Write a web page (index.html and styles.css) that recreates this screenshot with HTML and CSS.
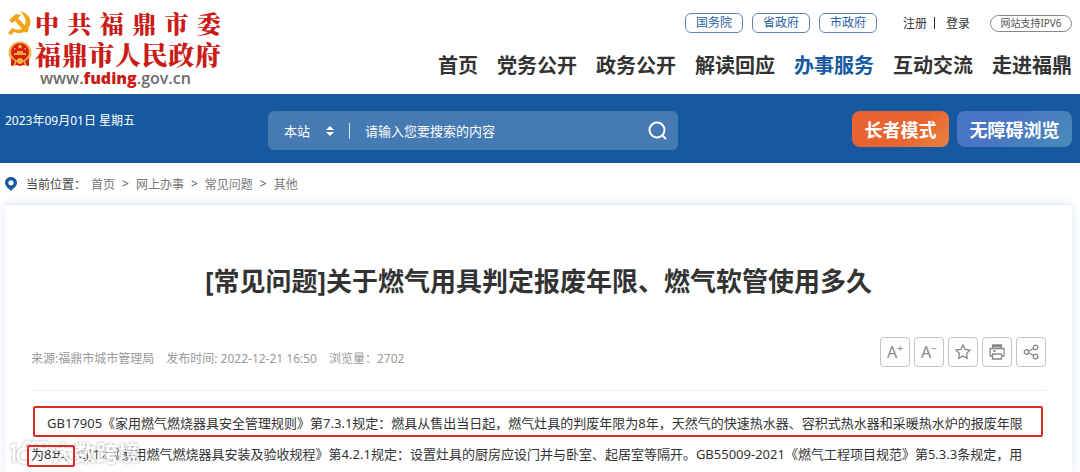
FILE: index.html
```
<!DOCTYPE html>
<html lang="zh-CN">
<head>
  <meta charset="UTF-8">
  <title>关于燃气用具判定报废年限、燃气软管使用多久</title>
  <link rel="stylesheet" href="styles.css">
</head>
<body>

  <header class="header">
    <a class="logo" href="#">
      <svg class="emblem" viewBox="0 0 24 24">
        <path d="M12 0C20 2 24 8 22 14C20 21 12 24 6 21L3 24L0 22L4 17C9 20 15 19 17 14C19 9 16 4 12 0Z" fill="#f2a516"/>
        <path d="M1 9L8 3L13 4L10 7L21 19L18 22L7 10L4 12Z" fill="#f2a516"/>
      </svg>
      <span class="logo-name party"><span>中</span><span>共</span><span>福</span><span>鼎</span><span>市</span><span>委</span></span>
      <svg class="emblem" viewBox="0 0 24 26">
        <circle cx="12" cy="12" r="11.5" fill="#eeb84c"/>
        <circle cx="12" cy="11" r="9" fill="#d91f17"/>
        <path d="M12 3l.8 1.800h1.800l-1.400 1.200.5 1.800-1.700-1-1.700 1 .5-1.800-1.400-1.200h1.800z" fill="#f6d04d"/>
        <path d="M6 14h12v-2h-3v-2H9v2H6zM6 7h1.500v1.500H6zM16.500 7H18v1.500h-1.500z" fill="#f6a83a"/>
        <path d="M3 17l5 2h8l5-2v8l-5-1-4 1-4-1-5 1z" fill="#d91f17"/>
        <path d="M4 17l4 3h8l4-3M8 20l-2 5M16 20l2 5" fill="none" stroke="#f0b63a" stroke-width="1.500"/>
        <circle cx="12" cy="20" r="3" fill="#f0b63a"/>
      </svg>
      <span class="logo-name"><span>福</span><span>鼎</span><span>市</span><span>人</span><span>民</span><span>政</span><span>府</span></span>
      <span class="logo-url">www.<b>fuding</b>.gov.cn</span>
    </a>

    <div class="header-right">
      <div class="top-links">
        <a class="gov" href="#">国务院</a>
        <a class="gov" href="#">省政府</a>
        <a class="gov" href="#">市政府</a>
        <span class="login"><a href="#">注册</a><i></i><a href="#">登录</a></span>
        <a class="ipv6" href="#">网站支持IPV6</a>
      </div>
      <nav class="nav">
        <a href="#">首页</a>
        <a href="#">党务公开</a>
        <a href="#">政务公开</a>
        <a href="#">解读回应</a>
        <a class="active" href="#">办事服务</a>
        <a href="#">互动交流</a>
        <a href="#">走进福鼎</a>
      </nav>
    </div>
  </header>

  <div class="banner">
    <div class="date">2023年09月01日 星期五</div>
    <form class="search">
      <span class="scope">
        <select aria-label="搜索范围"><option>本站</option></select>
        <svg viewBox="0 0 8 12"><path d="M4 1l4 4H0zM4 11l4-4H0z" fill="#fff"/></svg>
      </span>
      <input type="text" aria-label="搜索" placeholder="请输入您要搜索的内容">
      <button type="button" aria-label="搜索">
        <svg viewBox="0 0 20 20" fill="none" stroke="#fff" stroke-width="2"><circle cx="9" cy="9" r="7.500"/><path d="M14 14l4 4"/></svg>
      </button>
    </form>
    <div class="modes">
      <button class="mode elder" type="button">长者模式</button>
      <button class="mode barrier" type="button">无障碍浏览</button>
    </div>
  </div>

  <nav class="crumbs">
    <svg viewBox="0 0 12 14"><path d="M6 0C2.500 0 0 2.600 0 5.800C0 9 3 11 6 14C9 11 12 9 12 5.800C12 2.600 9.500 0 6 0ZM6 3.200a2.600 2.600 0 1 1 0 5.200a2.600 2.600 0 0 1 0-5.200Z" fill="#1659a0"/></svg>
    <span class="here">当前位置：</span>
    <a href="#">首页</a><span>&gt;</span>
    <a href="#">网上办事</a><span>&gt;</span>
    <a href="#">常见问题</a><span>&gt;</span>
    <a href="#">其他</a>
  </nav>

  <main class="card">
    <h1>[常见问题]关于燃气用具判定报废年限、燃气软管使用多久</h1>

    <div class="meta">
      <span>来源:福鼎市城市管理局</span>
      <span>发布时间: 2022-12-21 16:50</span>
      <span>浏览量：2702</span>
      <div class="tools">
        <button type="button" aria-label="放大字体">A<sup>+</sup></button>
        <button type="button" aria-label="缩小字体">A<sup>−</sup></button>
        <button type="button" aria-label="收藏">
          <svg viewBox="0 0 16 16"><path d="M8 1l2.100 4.400 4.900.7-3.500 3.400.8 4.900L8 12.100l-4.300 2.300.8-4.900L1 6.100l4.900-.7z"/></svg>
        </button>
        <button type="button" aria-label="打印">
          <svg viewBox="0 0 16 16"><path d="M3.500 4.500V1h9v3.500M3.500 12H1V4.500h14V12h-2.500M3.500 10h9v5h-9zM4 7h3M3.500 2.500h9"/></svg>
        </button>
        <button type="button" aria-label="分享">
          <svg viewBox="0 0 16 16"><circle cx="3.500" cy="8" r="2.300"/><circle cx="12.500" cy="3.500" r="2.300"/><circle cx="12.500" cy="12.500" r="2.300"/><path d="M5.600 7l4.800-2.500M5.600 9l4.800 2.500"/></svg>
        </button>
      </div>
    </div>

    <div class="article">
      <p>GB17905《家用燃气燃烧器具安全管理规则》第7.3.1规定：燃具从售出当日起，燃气灶具的判废年限为8年，天然气的快速热水器、容积式热水器和采暖热水炉的报废年限<br>为8年。CJJ12《家用燃气燃烧器具安装及验收规程》第4.2.1规定：设置灶具的厨房应设门并与卧室、起居室等隔开。GB55009-2021《燃气工程项目规范》第5.3.3条规定，用</p>
      <div class="watermark">
        <svg viewBox="0 0 42 26" fill="none" stroke="#fff" stroke-width="3">
          <path d="M1 7l4-2v18"/>
          <path d="M20 10a7 7 0 1 0 1 10"/>
          <path d="M15 9V6a4 4 0 0 1 8 0v3V6a4 4 0 0 1 8 0v2"/>
          <circle cx="35" cy="6" r="4"/>
        </svg>
        <span>大数跨境</span>
      </div>
      <div class="mark mark-line"></div>
      <div class="mark mark-years"></div>
    </div>
  </main>

</body>
</html>
```
FILE: styles.css
```
* {
  box-sizing: border-box;
}
body {
  display: flex;
  flex-direction: column;
  min-height: 100vh;
  margin: 0;
  font-family: "Noto Sans", "Noto Sans CJK SC", sans-serif;
  font-size: 12px;
  color: #333;
  background: #fff;
}
a {
  color: inherit;
  text-decoration: none;
}
button, input, select {
  font-family: inherit;
  border: none;
  background: none;
  padding: 0;
}
button {
  cursor: pointer;
}

/* header */
.header {
  display: flex;
  justify-content: space-between;
  height: 94px;
  padding: 8px 8px 0;
}
.logo {
  display: grid;
  grid-template-columns: 24px 186px;
  grid-template-rows: 30px 32px 16px;
  column-gap: 3px;
  align-items: center;
}
.emblem {
  width: 24px;
  height: 26px;
}
.logo-name {
  display: flex;
  justify-content: space-between;
  font-family: "Noto Serif CJK SC", "Noto Sans CJK SC", serif;
  font-size: 26px;
  font-weight: 900;
  line-height: 30px;
  color: #cb1b16;
}
.party {
  font-size: 24px;
}
.logo-url {
  grid-column: 1 / 3;
  padding-left: 32px;
  font-family: "Open Sans", sans-serif;
  font-size: 16px;
  font-weight: 600;
  line-height: 16px;
  color: #6b6b6b;
}
.logo-url b {
  color: #cb1b16;
}
.header-right {
  display: flex;
  flex-direction: column;
  align-items: flex-end;
}
.top-links {
  display: flex;
  align-items: center;
  margin-top: 5px;
}
.gov {
  width: 58px;
  margin-right: 9px;
  border: 1px solid #5c86ba;
  border-radius: 6px;
  line-height: 18px;
  text-align: center;
  color: #2a62a6;
}
.login {
  display: flex;
  align-items: center;
  margin: 0 20px 0 17px;
}
.login i {
  width: 1px;
  height: 12px;
  margin: 0 11px 0 7px;
  background: #333;
}
.ipv6 {
  width: 82px;
  border: 1px solid #888;
  border-radius: 9px;
  font-size: 10px;
  line-height: 15px;
  text-align: center;
  color: #555;
}
.nav {
  display: flex;
  gap: 19px;
  margin-top: 18px;
  font-size: 20px;
  font-weight: bold;
  line-height: 30px;
}
.nav .active {
  color: #1659a0;
}

/* search banner */
.banner {
  display: flex;
  justify-content: space-between;
  align-items: flex-start;
  height: 69px;
  padding: 17px 8px 0 5px;
  background: #1659a0;
  color: #fff;
}
.date {
  width: 263px;
  line-height: 20px;
}
.search {
  display: flex;
  align-items: center;
  flex: 0 1 410px;
  height: 39px;
  padding: 0 10px 0 16px;
  border-radius: 6px;
  background: #467ab3;
}
.scope {
  display: flex;
  align-items: center;
  justify-content: space-between;
  width: 66px;
  height: 16px;
  padding-right: 15px;
  border-right: 1px solid #dce6f1;
}
.scope svg {
  width: 8px;
  height: 12px;
}
.search select {
  appearance: none;
  width: 32px;
  font-size: 13px;
  color: #fff;
}
.search input {
  flex: 1;
  min-width: 0;
  padding-left: 15px;
  font-size: 13px;
  color: #fff;
  outline: none;
}
.search input::placeholder {
  color: #fff;
}
.search button, .search button svg {
  display: block;
  width: 20px;
  height: 20px;
}
.modes {
  display: flex;
  justify-content: flex-end;
  gap: 8px;
  flex: 1;
}
.mode {
  width: 97px;
  height: 36px;
  border-radius: 8px;
  font-size: 18px;
  font-weight: bold;
  color: #fff;
}
.elder {
  background: linear-gradient(135deg, #e8632f 60%, #ea8340);
}
.barrier {
  width: 115px;
  background: linear-gradient(135deg, #4a75c4 40%, #468cb8);
}

/* breadcrumb */
.crumbs {
  display: flex;
  align-items: center;
  height: 41px;
  padding-left: 5px;
  color: #777;
}
.crumbs svg {
  width: 12px;
  height: 14px;
}
.crumbs span {
  margin: 0 7px;
  color: #555;
}
.crumbs .here {
  margin: 0 5px 0 9px;
  color: #444;
}

/* article */
.card {
  flex: 1;
  margin: 0 8px 0 5px;
  padding: 54px 26px 0;
  border-top: 1px solid #e9ecf0;
  box-shadow: 0 0 12px #dfe9f5;
  background: #fff;
}
h1 {
  margin: 0;
  font-size: 26px;
  line-height: 44px;
  text-align: center;
}
.meta {
  display: flex;
  align-items: center;
  gap: 12px;
  height: 88px;
  padding-top: 22px;
  border-bottom: 1px solid #eee;
  color: #999;
}
.tools {
  display: flex;
  gap: 4px;
  margin-left: auto;
  margin-top: -12px;
}
.tools button {
  display: flex;
  align-items: center;
  justify-content: center;
  width: 30px;
  height: 30px;
  border: 1px solid #c4c4c4;
  border-radius: 4px;
  font-size: 16px;
  color: #888;
}
.tools sup {
  align-self: flex-start;
  font-size: 10px;
  line-height: 20px;
}
.tools svg {
  width: 16px;
  height: 16px;
  fill: none;
  stroke: #888;
  stroke-width: 1.3;
}
.article {
  position: relative;
  padding-top: 17px;
}
.article p {
  margin: 0;
  font-size: 13px;
  line-height: 31px;
  text-indent: 16px;
  white-space: nowrap;
}
.mark {
  position: absolute;
  border: 2px solid #dc2b24;
  border-radius: 2px;
}
.mark-line {
  top: 15px;
  left: 2px;
  right: 3px;
  height: 31px;
}
.mark-years {
  top: 54px;
  left: -4px;
  width: 48px;
  height: 22px;
}
.watermark {
  position: absolute;
  top: 46px;
  left: -22px;
  display: flex;
  align-items: center;
  gap: 1px;
  font-size: 22px;
  font-weight: bold;
  line-height: 31px;
  color: #fff;
  text-shadow: 0 0 3px #888;
  opacity: 0.8;
}
.watermark svg {
  width: 42px;
  height: 26px;
  filter: drop-shadow(0 0 1px #888);
}
```
